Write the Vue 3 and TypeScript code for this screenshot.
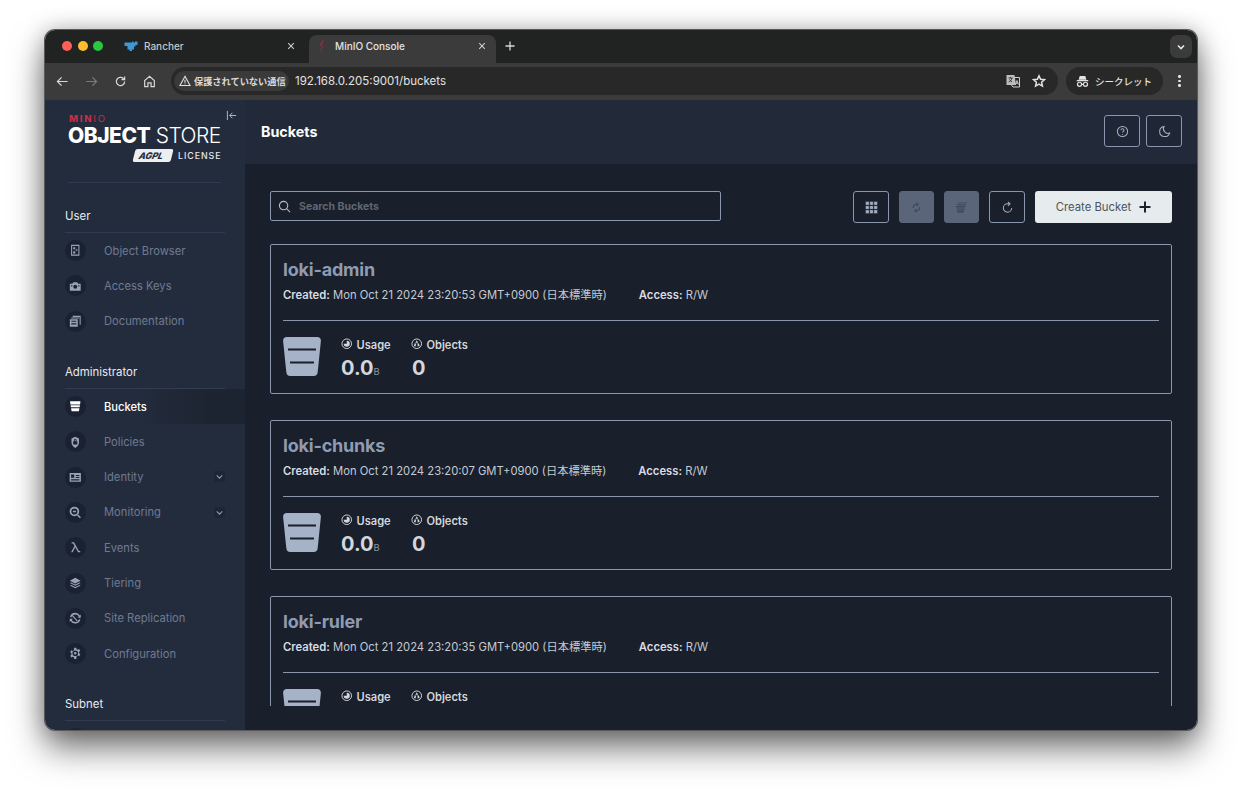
<script setup lang="ts">
interface NavItem { label: string; d: string; active?: boolean; chevron?: boolean }
interface Section { title: string; items: NavItem[] }
interface Bucket { name: string; created: string }

const sections: Section[] = [
  { title: 'User', items: [
    { label: 'Object Browser', d: 'M2 .8h8v10.400H2zM3 1.900v8.200h6V1.900zM4 3h2v2H4zM6.500 5h1.500v1.500H6.500zM4 7h2v2H4z' },
    { label: 'Access Keys', d: 'M.8 3.500h2.400l1-1.300h3.600l1 1.300h2.400v6.700H.8zM6 4.600a1.900 1.900 0 1 0 0 3.800a1.900 1.900 0 1 0 0-3.800zM2 5h1.200v1.200H2zM8.800 5H10v1.200H8.800z' },
    { label: 'Documentation', d: 'M3.500.8h7.700v8.500h-1V1.800H3.500zM2.200 2.400h7.400v1H2.200zM.8 4h7.600v7.200H.8zM2.200 5.400v1h4.800v-1zM2.200 8v1h4.800V8z' },
  ]},
  { title: 'Administrator', items: [
    { label: 'Buckets', active: true, d: 'M1 1.200h10l-.4 3H1.400zM1.500 5h9l-.3 2H1.800zM2 7.800h8l-.5 3H2.500z' },
    { label: 'Policies', d: 'M6 .6l3.600 1.700v4c0 2.400-1.700 4.200-3.600 5.100C4.100 10.500 2.400 8.700 2.400 6.300v-4zM6 2.900a1.200 1.200 0 0 0-1.200 1.200v.9H4v3.200h4V5h-.8v-.9A1.200 1.200 0 0 0 6 2.900zM6 3.800c.3 0 .5.200.5.500V5h-1v-.7c0-.3.200-.5.500-.5z' },
    { label: 'Identity', chevron: true, d: 'M.6 1.800h10.800v8.400H.6zM2 3.400v3h3v-3zM6.500 3.800v1H10v-1zM6.500 5.800v1H10v-1zM2 8v1h8V8z' },
    { label: 'Monitoring', chevron: true, d: 'M5.200 .6a4.600 4.600 0 1 1 0 9.200a4.600 4.600 0 1 1 0-9.200zM5.200 2.300a2.900 2.900 0 1 0 0 5.800a2.900 2.900 0 1 0 0-5.800zM8.500 8l3 2.700-1.100 1.100-2.900-3zM3.800 4.500h2.800v1.400H3.800z' },
    { label: 'Events', d: 'M2.500 1.200h2.300l4.700 8.300h1.300v1.300H8.700L6 6 3.500 10.800H2l3.300-6L4 2.500H2.500z' },
    { label: 'Tiering', d: 'M6 .8l5.200 2.700L6 6.200.8 3.500zM.8 5.800l1.200-.6L6 7.200l4-2 1.200.6L6 8.400zM.8 8.200l1.200-.6 4 2 4-2 1.200.6L6 10.900z' },
    { label: 'Site Replication', d: 'M6 .8a5.200 5.200 0 0 1 4.400 2.500l.9-.9v3.100H8.200l1.200-1.200A3.900 3.900 0 0 0 2.300 5L1 4.700A5.200 5.200 0 0 1 6 .8zM.7 6.500h3.100L2.600 7.700A3.900 3.900 0 0 0 9.700 7l1.300.3a5.200 5.200 0 0 1-9.400 1.400l-.9.900zM3.800 3.200l5 5.600-.8.700-5-5.600z' },
    { label: 'Configuration', d: 'M5 .6h2l.3 1.500 1 .5 1.400-.7 1.100 1.800-1.200 1 .1 1.300 1.200 1-1.100 1.800-1.400-.7-1 .5L7 11.400H5l-.3-1.500-1-.5-1.400.7L1.200 8.300l1.200-1-.1-1.300-1.200-1 1.100-1.800 1.400.7 1-.5zM6 3.300a2.700 2.700 0 1 0 0 5.400a2.700 2.700 0 1 0 0-5.400zM6 4.700a1.300 1.300 0 1 1 0 2.600a1.300 1.300 0 1 1 0-2.600z' },
  ]},
  { title: 'Subnet', items: [
    { label: '', d: '' },
  ]},
]

const buckets: Bucket[] = [
  { name: 'loki-admin', created: 'Mon Oct 21 2024 23:20:53 GMT+0900 (日本標準時)' },
  { name: 'loki-chunks', created: 'Mon Oct 21 2024 23:20:07 GMT+0900 (日本標準時)' },
  { name: 'loki-ruler', created: 'Mon Oct 21 2024 23:20:35 GMT+0900 (日本標準時)' },
]
</script>

<template>
  <div class="window">
    <div class="tabstrip">
      <div class="lights">
        <span class="light red"></span><span class="light yellow"></span><span class="light green"></span>
      </div>
      <div class="tab">
        <svg class="favicon" viewBox="0 0 14 12"><path fill="#3d98d3" d="M.5 2.500H8V1.500h1.500v1H11v-1h2.500V5H11.500v1.500H10V9.500H8V11H5.500V9.500H3.500V6H.5z"/></svg>
        <span class="tab-title">Rancher</span>
        <svg class="tab-x" viewBox="0 0 10 10"><path d="M1.500 1.500l7 7M8.500 1.500l-7 7"/></svg>
      </div>
      <div class="tab tab-active">
        <svg class="favicon" viewBox="0 0 14 14"><path fill="#a52c43" d="M7.500 .5c1.200.5 1.300 2 .4 3L6.700 5c-.4.500-.3 1 .2 1.500l1 1-1.500 3.500-.1 2.500H5.700l.1-2.800L7 7.800 5.600 6.600c-.6-.6-.6-1.500 0-2.200L7.200 2.500c.4-.5.500-1.200.3-2z"/></svg>
        <span class="tab-title">MinIO Console</span>
        <svg class="tab-x" viewBox="0 0 10 10"><path d="M1.500 1.500l7 7M8.500 1.500l-7 7"/></svg>
      </div>
      <svg class="newtab" viewBox="0 0 10 10"><path d="M5 .5v9M.5 5h9"/></svg>
      <div class="tab-menu">
        <svg viewBox="0 0 10 10"><path d="M2 3.500l3 3 3-3"/></svg>
      </div>
    </div>

    <div class="toolbar">
      <svg class="tool" viewBox="0 0 14 14"><path d="M12.500 7h-11M6 2.500L1.500 7 6 11.500"/></svg>
      <svg class="tool tool-off" viewBox="0 0 14 14"><path d="M1.500 7h11M8 2.500L12.500 7 8 11.500"/></svg>
      <svg class="tool" viewBox="0 0 14 14"><path d="M11.500 7a4.500 4.500 0 1 1-1.300-3.200L11.500 5M11.500 1.500V5H8"/></svg>
      <svg class="tool" viewBox="0 0 14 14"><path d="M7 1.500L1.800 6v6.500h3.500V8.500h3.400v4h3.500V6z"/></svg>
      <div class="omnibox">
        <div class="chip">
          <svg class="warn" viewBox="0 0 12 12"><path d="M6 1.300L11 10.500H1zM6 4.700v3M6 8.500v.8"/></svg>
          <span>保護されていない通信</span>
        </div>
        <span class="url">192.168.0.205:9001/buckets</span>
        <span class="omni-spacer"></span>
        <svg class="omni-icon translate" viewBox="0 0 14 14">
          <path class="tr-b" d="M5 3.500h8.500v9.500H7l-1.500-2"/>
          <path class="tr-a" d="M.5 1h8l1.500 10H.5z"/>
          <path class="tr-c" d="M2.500 4h4M4.500 3v1M6 4C5.600 6 4.200 7.500 2.700 8M3.500 5.500c.6 1 1.500 2 2.500 2.500"/>
          <path class="tr-d" d="M9.500 10.500l1.500-4 1.500 4M10 9.200h2"/>
        </svg>
        <svg class="omni-icon star" viewBox="0 0 14 14"><path d="M7 1.800l1.600 3.500 3.800.4-2.800 2.600.8 3.800L7 10.200l-3.400 1.900.8-3.800L1.600 5.700l3.800-.4z"/></svg>
      </div>
      <div class="incognito">
        <svg viewBox="0 0 14 14"><path class="inc-fill" d="M4 1h6l1.200 4H2.800zM.8 5.500h12.400v1.300H.8z"/><circle cx="3.800" cy="10" r="2.200"/><circle cx="10.200" cy="10" r="2.200"/><path d="M6 10h2"/></svg>
        <span>シークレット</span>
      </div>
      <div class="kebab"><i></i><i></i><i></i></div>
    </div>

    <div class="app">
      <aside class="sidebar">
        <svg class="collapse" viewBox="0 0 12 12"><path d="M1.500 1v10M11 6H4M7 3L4 6l3 3"/></svg>
        <div class="logo">
          <div class="logo-minio">MIN<span>IO</span></div>
          <div class="logo-main"><b>OBJECT</b> <span>STORE</span></div>
          <div class="logo-license">
            <span class="agpl">AGPL</span>
            <span class="lic">LICENSE</span>
          </div>
        </div>
        <div class="logo-rule"></div>
        <nav>
          <section v-for="s in sections" :key="s.title" class="nav-section">
            <h3>{{ s.title }}</h3>
            <div v-for="item in s.items" :key="item.label" class="nav-row" :class="{ active: item.active }">
              <span class="nav-dot">
                <svg v-if="item.d" viewBox="0 0 12 12"><path fill-rule="evenodd" :d="item.d"/></svg>
              </span>
              <span class="nav-label">{{ item.label }}</span>
              <span v-if="item.chevron" class="nav-chev">
                <svg viewBox="0 0 10 10"><path d="M2.500 4l2.500 2.500L7.500 4"/></svg>
              </span>
            </div>
          </section>
        </nav>
      </aside>

      <main class="main">
        <header class="page-head">
          <h1>Buckets</h1>
          <div class="head-actions">
            <button class="icon-btn">
              <svg viewBox="0 0 14 14"><circle cx="7" cy="7" r="5.500"/><path d="M5.400 5.600a1.600 1.600 0 1 1 2.400 1.400c-.6.300-.8.600-.8 1.200M7 9.600v.8"/></svg>
            </button>
            <button class="icon-btn">
              <svg viewBox="0 0 14 14"><path d="M6.500 1.500a5.500 5.500 0 1 0 6 7.200A5 5 0 0 1 6.500 1.500z"/></svg>
            </button>
          </div>
        </header>

        <div class="content">
          <div class="controls">
            <label class="search">
              <svg viewBox="0 0 14 14"><circle cx="6" cy="6" r="4.500"/><path d="M9.500 9.500L13 13"/></svg>
              <input type="text" placeholder="Search Buckets" />
            </label>
            <div class="ctrl-right">
              <button class="icon-btn">
                <svg viewBox="0 0 12 12" class="grid-ico">
                  <path d="M.5.500h3.300v3.300H.5zM4.350.500h3.300v3.300h-3.300zM8.200.500h3.300v3.300H8.200zM.5 4.350h3.300v3.300H.5zM4.350 4.350h3.300v3.300h-3.300zM8.200 4.350h3.300v3.300H8.200zM.5 8.200h3.300v3.300H.5zM4.350 8.200h3.300v3.300h-3.300zM8.200 8.200h3.300v3.300H8.200z"/>
                </svg>
              </button>
              <button class="icon-btn off">
                <svg viewBox="0 0 14 14" class="off-line"><path d="M3.500 7.500A3.500 3.500 0 0 1 7 3.500M7 1.800L8.600 3.500 7 5.200M10.500 6.500A3.500 3.500 0 0 1 7 10.500M7 8.800L5.400 10.500 7 12.200"/></svg>
              </button>
              <button class="icon-btn off">
                <svg viewBox="0 0 14 14" class="off-fill"><path d="M3.500 1.500h9.500v1H3.500zM2.200 3.500h9.800v1H2.200zM1 5.500h10v1.500H1zM1.600 8h8.800l-.3 1.300H1.900zM2.200 10.200h7.600l-.4 2.300H2.600z"/></svg>
              </button>
              <button class="icon-btn">
                <svg viewBox="0 0 14 14"><path d="M11.500 7.500A4.500 4.500 0 1 1 7 3h2.500M7.500 .8L9.700 3 7.500 5.200"/></svg>
              </button>
              <button class="create">
                <span>Create Bucket</span>
                <svg viewBox="0 0 12 12"><path d="M6 .5v11M.5 6h11"/></svg>
              </button>
            </div>
          </div>

          <div class="list">
            <article v-for="b in buckets" :key="b.name" class="card">
              <h2>{{ b.name }}</h2>
              <div class="meta">
                <span class="meta-created"><b>Created:</b> {{ b.created }}</span>
                <span><b>Access:</b> R/W</span>
              </div>
              <div class="card-rule"></div>
              <div class="stats">
                <svg class="bucket" viewBox="0 0 38 39">
                  <path d="M4 0h30c2.600 0 4 1.400 3.900 4l-3.200 31c-.2 2.600-1.600 4-4 4H7.300c-2.400 0-3.800-1.400-4-4L.1 4C0 1.400 1.400 0 4 0z"/>
                  <path class="bucket-line" d="M5 12.500h28M7 25.500h24"/>
                </svg>
                <div class="stat stat-usage">
                  <div class="stat-label">
                    <svg viewBox="0 0 12 12"><circle cx="6" cy="6" r="5"/><path class="solid" d="M6 6V2.800A3.200 3.200 0 1 1 2.800 6z"/></svg>
                    Usage
                  </div>
                  <div class="stat-value">0.0<small>B</small></div>
                </div>
                <div class="stat">
                  <div class="stat-label">
                    <svg viewBox="0 0 12 12"><circle cx="6" cy="6" r="5"/><path class="solid" d="M6 2.400l1.500 2.500h-3zM3.700 5.800h2l-1 1.800 1 .9H3zM6.300 5.800h2L9 8.500H6.300l1-.9z"/></svg>
                    Objects
                  </div>
                  <div class="stat-value stat-num">0</div>
                </div>
              </div>
            </article>
          </div>
        </div>
      </main>
    </div>
  </div>
</template>

<style>
html, body { margin: 0; background: #fff; }
</style>

<style scoped>
* { box-sizing: border-box; }

.window {
  width: 1152px;
  height: 700px;
  margin: 30px 45px 60px;
  border-radius: 10px;
  overflow: hidden;
  display: flex;
  flex-direction: column;
  font-family: Inter, "Noto Sans CJK JP", sans-serif;
  box-shadow: 0 0 0 1px #5a5a5a, 0 18px 34px rgba(0, 0, 0, .55), 0 0 22px rgba(0, 0, 0, .25);
}

/* tab strip */
.tabstrip {
  height: 33px;
  flex: none;
  background: #202322;
  display: flex;
  align-items: flex-end;
  position: relative;
}
.lights {
  display: flex;
  gap: 5.500px;
  margin: 0 15px 12px 17px;
  align-self: flex-end;
}
.light { width: 10px; height: 10px; border-radius: 50%; }
.red { background: #ff5f57; }
.yellow { background: #febc2e; }
.green { background: #28c840; }
.tab {
  width: 187px;
  height: 28px;
  margin-right: 4px;
  padding: 0 0 6px 6px;
  display: flex;
  align-items: center;
  color: #c7c7c7;
  font-size: 10px;
  font-weight: 500;
  border-radius: 8px 8px 0 0;
}
.tab-active { background: #3b3b3b; color: #e3e3e3; }
.favicon { width: 14px; height: 14px; margin-right: 6px; flex: none; }
.tab-title { flex: 1; }
.tab-x { width: 8px; height: 8px; margin-right: 10px; fill: none; stroke: #d0d0d0; stroke-width: 1.300; }
.newtab { width: 10px; height: 10px; margin: 0 0 12px 5px; fill: none; stroke: #d8d8d8; stroke-width: 1.300; }
.tab-menu {
  position: absolute;
  right: 5px;
  top: 5px;
  width: 22px;
  height: 23px;
  border-radius: 7px;
  background: #3b3b3b;
  display: flex;
  align-items: center;
  justify-content: center;
}
.tab-menu svg { width: 10px; height: 10px; fill: none; stroke: #e6e6e6; stroke-width: 1.600; }

/* toolbar */
.toolbar {
  height: 37px;
  flex: none;
  background: #3b3b3b;
  display: flex;
  align-items: center;
  padding-left: 11px;
  padding-bottom: 1px;
}
.tool { width: 13px; height: 13px; margin-right: 16px; fill: none; stroke: #d8d8d8; stroke-width: 1.300; flex: none; }
.tool-off { stroke: #7c7c7c; }
.omnibox {
  width: 887px;
  height: 28px;
  margin-left: -1px;
  background: #282828;
  border-radius: 14px;
  display: flex;
  align-items: center;
  padding-left: 3px;
}
.chip {
  width: 115px;
  height: 20px;
  border-radius: 10px;
  background: #3a3a3a;
  display: flex;
  align-items: center;
  padding-left: 5px;
  color: #d9d9d9;
  font-size: 9.200px;
  font-weight: 700;
  white-space: nowrap;
}
.warn { width: 12px; height: 12px; margin-right: 3px; fill: none; stroke: #e0e0e0; stroke-width: 1.100; flex: none; }
.url { margin-left: 6px; color: #e3e3e3; font-size: 11.500px; white-space: nowrap; }
.omni-spacer { flex: 1; }
.omni-icon { width: 14px; height: 14px; flex: none; }
.translate { margin-right: 12px; }
.tr-a { fill: #bdbdbd; }
.tr-b { fill: #282828; stroke: #d0d0d0; stroke-width: 1; }
.tr-c { fill: none; stroke: #282828; stroke-width: .9; }
.tr-d { fill: none; stroke: #d0d0d0; stroke-width: .9; }
.star { margin-right: 12px; fill: none; stroke: #e3e3e3; stroke-width: 1.500; }
.incognito {
  width: 97px;
  height: 28px;
  margin-left: 8px;
  border-radius: 14px;
  background: #282828;
  display: flex;
  align-items: center;
  padding-left: 10px;
  color: #e3e3e3;
  font-size: 9.500px;
  font-weight: 500;
  white-space: nowrap;
}
.incognito svg { width: 13px; height: 13px; margin-right: 6px; fill: none; stroke: #e3e3e3; stroke-width: 1.300; flex: none; }
.incognito .inc-fill { fill: #e3e3e3; stroke: none; }
.kebab { margin-left: 15px; display: flex; flex-direction: column; gap: 2px; }
.kebab i { width: 2.500px; height: 2.500px; border-radius: 50%; background: #e3e3e3; display: block; }

/* app */
.app { flex: 1; min-height: 0; display: flex; }

.sidebar {
  width: 200px;
  flex: none;
  background: #232c3d;
  position: relative;
  overflow: hidden;
  padding-left: 20px;
}
.collapse { position: absolute; left: 181px; top: 10px; width: 11px; height: 11px; fill: none; stroke: #b9c1cf; stroke-width: 1; }
.logo { padding: 15px 0 0 4px; width: 180px; color: #fff; }
.logo-minio { font-size: 9.500px; line-height: 8px; font-weight: 800; letter-spacing: 1.800px; color: #c72c48; }
.logo-minio span { font-weight: 400; }
.logo-main { font-size: 21px; line-height: 22px; margin-top: 2px; letter-spacing: -.5px; white-space: nowrap; margin-left: -1px; }
.logo-main b { font-weight: 800; }
.logo-main span { font-weight: 300; }
.logo-license { display: flex; align-items: center; gap: 6px; margin-left: 65px; height: 14px; margin-top: 1px; }
.agpl {
  width: 38px;
  height: 13px;
  background: #eceef0;
  color: #232c3d;
  font-size: 9px;
  line-height: 13px;
  font-weight: 800;
  font-style: italic;
  padding-left: 5px;
  transform: skewX(-14deg);
  border-radius: 2px;
}
.lic { font-size: 8.800px; font-weight: 500; letter-spacing: .95px; color: #e6e8ec; }
.logo-rule { width: 153px; height: 1px; margin: 20px 0 0 3px; background: #2f3a4e; }

.nav-section { width: 160px; }
.nav-section h3 {
  margin: 0;
  height: 30px;
  padding-bottom: 9px;
  display: flex;
  align-items: flex-end;
  border-bottom: 1px solid #313c50;
  font-size: 11.400px;
  font-weight: 400;
  line-height: 14px;
  color: #e8ebef;
}
.nav-section:first-child h3 { margin-top: 10px; height: 40px; }
.nav-section + .nav-section { margin-top: 20px; }
.nav-row {
  width: 180px;
  height: 35.300px;
  display: flex;
  align-items: center;
  position: relative;
  color: #6f7b91;
  font-size: 11.200px;
}
.nav-row.active { color: #fff; font-weight: 500; }
.nav-row.active::before {
  content: "";
  position: absolute;
  inset: 0;
  background: linear-gradient(90deg, transparent 40%, #1d2431 80%);
}
.nav-dot {
  width: 21px;
  height: 21px;
  border-radius: 50%;
  background: #1a2232;
  display: flex;
  align-items: center;
  justify-content: center;
  position: relative;
  flex: none;
}
.nav-dot svg { width: 12.500px; height: 12.500px; fill: #98a3b6; }
.active .nav-dot svg { fill: #fff; }
.nav-label { margin-left: 18px; position: relative; }
.nav-chev {
  position: absolute;
  left: 149px;
  top: 12px;
  width: 11px;
  height: 11px;
  background: #1e2635;
  border-radius: 1px;
  display: flex;
}
.nav-chev svg { width: 11px; height: 11px; fill: none; stroke: #8d98ac; stroke-width: 1; }

/* main */
.main { flex: 1; min-width: 0; background: #191f2b; display: flex; flex-direction: column; }
.page-head {
  height: 64px;
  flex: none;
  background: #222a3a;
  display: flex;
  align-items: center;
  justify-content: space-between;
  padding: 0 15px 2px 16px;
}
.page-head h1 { margin: 0; font-size: 14.300px; font-weight: 700; color: #fff; }
.head-actions { display: flex; gap: 6px; }

.icon-btn {
  width: 36px;
  height: 32px;
  padding: 0;
  background: transparent;
  border: 1px solid #8a96ab;
  border-radius: 3px;
  display: flex;
  align-items: center;
  justify-content: center;
  flex: none;
}
.page-head .icon-btn { background: #1f2635; }
.icon-btn svg { width: 13px; height: 13px; fill: none; stroke: #a6b0c1; stroke-width: 1.100; }
.icon-btn svg.grid-ico { width: 13px; height: 13px; fill: #a6b0c1; stroke: #191f2b; stroke-width: .35; }
.icon-btn.off { width: 35px; background: #5b6579; border-color: #5b6579; }
.icon-btn.off svg.off-line { stroke: #3e485a; stroke-width: 1.300; }
.icon-btn.off svg.off-fill { fill: #3e485a; stroke: none; }

.content {
  flex: 1;
  min-height: 0;
  padding: 27px 25px 24px;
  display: flex;
  flex-direction: column;
}
.controls { display: flex; justify-content: space-between; flex: none; }
.search {
  width: 451px;
  height: 30px;
  border: 1px solid #8a96ab;
  border-radius: 2px;
  display: flex;
  align-items: center;
  padding-left: 7px;
}
.search svg { width: 13px; height: 13px; fill: none; stroke: #b4bcc9; stroke-width: 1.200; flex: none; }
.search input {
  flex: 1;
  background: transparent;
  border: 0;
  outline: 0;
  padding: 0;
  margin-left: 8px;
  font: 700 10.500px Inter, sans-serif;
  color: #c9ced6;
}
.search input::placeholder { color: #5f6773; opacity: 1; }
.ctrl-right { display: flex; gap: 10px; align-items: center; }
.create {
  width: 137px;
  height: 32px;
  background: #e6ebee;
  border: 0;
  border-radius: 3px;
  display: flex;
  align-items: center;
  justify-content: center;
  gap: 8px;
  font: 400 11.300px Inter, sans-serif;
  color: #4a5560;
  padding: 0;
}
.create svg { width: 12px; height: 12px; fill: none; stroke: #1b2230; stroke-width: 2; }

.list { flex: 1; min-height: 0; overflow: hidden; margin-top: 21px; display: flex; flex-direction: column; gap: 26px; }
.card {
  flex: none;
  height: 150px;
  border: 1px solid #8a96ab;
  border-radius: 2px;
  padding: 13px 12px 0;
}
.card h2 { margin: 0; font-size: 18px; line-height: 24px; font-weight: 700; color: #8e9bb2; letter-spacing: -.2px; }
.meta { margin-top: 5px; display: flex; gap: 32px; font-size: 11.250px; line-height: 16px; color: #c6cbd3; white-space: nowrap; }
.meta b { font-weight: 600; color: #d8dce2; }
.card-rule { height: 1px; margin-top: 17px; background: #8a96ab; }
.stats { display: flex; margin-top: 16px; }
.bucket { width: 38px; height: 39px; fill: #a6b2c8; flex: none; margin-right: 20px; }
.bucket-line { fill: none; stroke: #191f2b; stroke-width: 1.800; }
.stat { color: #d3d7dd; }
.stat-usage { width: 70px; }
.stat-label { display: flex; align-items: center; gap: 4px; margin-top: 1px; font-size: 11.100px; line-height: 14px; font-weight: 600; }
.stat-label svg { width: 11.500px; height: 11.500px; fill: none; stroke: #d3d7dd; stroke-width: 1; margin-top: -3px; }
.stat-label .solid { fill: #d3d7dd; stroke: none; }
.stat-value { font-size: 20px; line-height: 24px; font-weight: 700; margin-top: 4px; }
.stat-value small { font-size: 9.500px; font-weight: 400; color: #8d95a3; }
.stat-num { padding-left: 1px; }
</style>
